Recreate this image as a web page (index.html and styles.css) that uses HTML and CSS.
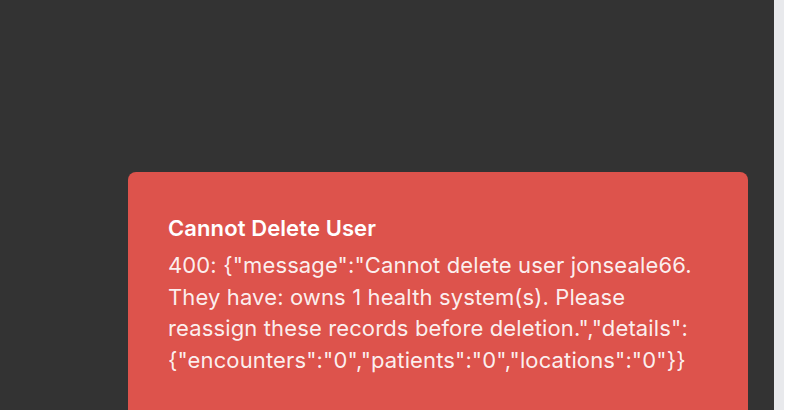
FILE: index.html
```html
<!DOCTYPE html>
<html>
<head>
<meta charset="utf-8">
<link rel="stylesheet" href="styles.css">
</head>
<body>
<div class="page">
  <div class="overlay">
    <div class="toast">
      <div class="toast-title">Cannot Delete User</div>
      <div class="toast-body">400: {"message":"Cannot delete user jonseale66. They have: owns 1 health system(s). Please reassign these records before deletion.","details":{"encounters":"0","patients":"0","locations":"0"}}</div>
    </div>
  </div>
  <div class="scrollbar"></div>
</div>
</body>
</html>
```
FILE: styles.css
```css
html, body {
  margin: 0;
  padding: 0;
  height: 100%;
  overflow: hidden;
}
body {
  font-family: Inter, "Noto Sans", sans-serif;
  background: #ffffff;
}
.page {
  display: flex;
  height: 410px;
}
.overlay {
  width: 774px;
  background: #333333;
  padding: 172px 26px 0 128px;
  box-sizing: border-box;
}
.toast {
  background: #dd534c;
  border-radius: 8px;
  padding: 40px 40px 60px 40px;
  color: #ffffff;
  height: 300px;
  box-sizing: border-box;
}
.toast-title {
  font-size: 22px;
  font-weight: 600;
  line-height: 32px;
  letter-spacing: 0.1px;
}
.toast-body {
  font-size: 22px;
  line-height: 31.5px;
  letter-spacing: 0.13px;
  color: rgba(255,255,255,0.92);
  margin-top: 6px;
}
.scrollbar {
  width: 10px;
  background: #e8e9ec;
}
```
